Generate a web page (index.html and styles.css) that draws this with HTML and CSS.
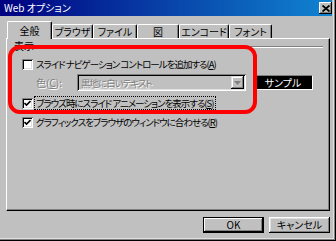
FILE: index.html
```html
<!DOCTYPE html>
<html lang="ja">
<head>
    <meta charset="UTF-8">
    <title>Web オプション</title>
    <link rel="stylesheet" href="styles.css">
</head>
<body>
    <div class="window">
        <div class="titlebar">
            <span class="title">Web オプション</span>
            <span class="close-btn">
                <svg width="8" height="7" viewBox="0 0 8 7">
                    <path d="M0.5 0.5 L7.5 6.5 M7.5 0.5 L0.5 6.5" stroke="#000" stroke-width="1.8" fill="none"/>
                </svg>
            </span>
        </div>

        <div class="dialog">
            <div class="tabs">
                <div class="tab active tab-general">全般</div>
                <div class="tab tab-browser">ブラウザ</div>
                <div class="tab tab-file">ファイル</div>
                <div class="tab tab-picture">図</div>
                <div class="tab tab-encoding">エンコード</div>
                <div class="tab tab-font">フォント</div>
            </div>

            <div class="panel">
                <div class="group-head">
                    <span>表示</span>
                    <span class="rule"></span>
                </div>

                <div class="option">
                    <span class="check"></span>
                    <span class="label">スライド ナビゲーション コントロールを追加する(<u>A</u>)</span>
                </div>

                <div class="color-row">
                    <span class="disabled color-label">色(<u>C</u>):</span>
                    <div class="combo">
                        <span class="disabled label">黒地に白いテキスト</span>
                        <span class="combo-btn">
                            <svg width="7" height="4" viewBox="0 0 7 4">
                                <path d="M0 0 H7 L3.5 4 Z" fill="#808080"/>
                            </svg>
                        </span>
                    </div>
                    <div class="sample">サンプル</div>
                </div>

                <div class="option">
                    <span class="check">
                        <svg width="7" height="7" viewBox="0 0 7 7">
                            <polyline points="0.5,3 2.5,5 6.5,1" stroke="#000" stroke-width="1.6" fill="none"/>
                        </svg>
                    </span>
                    <span class="label focused">ブラウズ時にスライド アニメーションを表示する(<u>S</u>)</span>
                </div>

                <div class="option">
                    <span class="check">
                        <svg width="7" height="7" viewBox="0 0 7 7">
                            <polyline points="0.5,3 2.5,5 6.5,1" stroke="#000" stroke-width="1.6" fill="none"/>
                        </svg>
                    </span>
                    <span class="label">グラフィックスをブラウザのウィンドウに合わせる(<u>R</u>)</span>
                </div>

                <!-- red marker drawn over the first options -->
                <div class="highlight"></div>
            </div>

            <div class="buttons">
                <button class="btn default">OK</button>
                <button class="btn">キャンセル</button>
            </div>
        </div>
    </div>
</body>
</html>
```

FILE: styles.css
```css
* {
    box-sizing: border-box;
}
body {
    margin: 0;
    background: #c0c0c0;
    font-family: "Noto Sans CJK JP", "Noto Sans", sans-serif;
    font-size: 10px;
    line-height: 12px;
    color: #000;
    font-feature-settings: "palt";
}
.window {
    width: 336px;
    height: 241px;
    display: flex;
    flex-direction: column;
    border-right: 1px solid #000;
    border-bottom: 1px solid #000;
    box-shadow: inset -1px -1px #808080, inset -2px -2px #dfdfdf;
    padding: 0 3px 2px 0;
}
.titlebar {
    height: 16px;
    display: flex;
    align-items: center;
    justify-content: space-between;
    padding: 0 0 0 4px;
    background: linear-gradient(90deg, #000080, #1084d0);
    color: #fff;
}
.title {
    font-size: 10px;
}
.close-btn {
    width: 13px;
    height: 12px;
    display: flex;
    align-items: center;
    justify-content: center;
    background: #c0c0c0;
    box-shadow: inset -1px -1px #000, inset 1px 1px #fff, inset -2px -2px #808080;
}
.dialog {
    flex: 1;
    padding: 5px 0 0 6px;
}
.tabs {
    height: 17px;
    display: flex;
    align-items: flex-end;
    padding-left: 3px;
    position: relative;
    z-index: 1;
}
.tab {
    height: 14px;
    display: flex;
    align-items: center;
    justify-content: center;
    border-top: 1px solid #fff;
    border-left: 1px solid #fff;
    border-right: 1px solid #000;
    border-radius: 2px 2px 0 0;
    box-shadow: inset -1px 0 #808080;
    background: #c0c0c0;
}
.tab.active {
    height: 18px;
    margin: 0 0 -1px -2px;
}
.tab-general { width: 45px; }
.tab-browser { width: 41px; }
.tab-file { width: 44px; }
.tab-picture { width: 42px; }
.tab-encoding { width: 50px; }
.tab-font { width: 43px; }
.panel {
    position: relative;
    width: 324px;
    height: 173px;
    border: 1px solid;
    border-color: #fff #000 #000 #fff;
    box-shadow: inset -1px -1px #808080;
    padding: 1px 0 0 7px;
}
.group-head {
    display: flex;
    align-items: center;
    height: 12px;
    margin-right: 6px;
}
.rule {
    flex: 1;
    margin: 2px 0 0 4px;
    border-top: 1px solid #808080;
    border-bottom: 1px solid #fff;
}
.option {
    height: 14px;
    margin-top: 5px;
    padding-left: 8px;
    display: flex;
    align-items: center;
    gap: 3px;
}
.label {
    font-size: 9.5px;
    letter-spacing: -1px;
}
.check {
    width: 11px;
    height: 11px;
    display: flex;
    align-items: center;
    justify-content: center;
    background: #fff;
    box-shadow: inset 1px 1px #808080, inset -1px -1px #fff, inset 2px 2px #000, inset -2px -2px #dfdfdf;
}
.focused {
    outline: 1px dotted #000;
    padding: 0 2px 0 1px;
    margin-left: -1px;
}
.disabled {
    color: #808080;
    text-shadow: 1px 1px 0 #fff;
}
.color-row {
    height: 17px;
    margin-top: 3px;
    padding-left: 22px;
    display: flex;
    align-items: center;
}
.color-label {
    width: 41px;
}
.combo {
    width: 169px;
    height: 17px;
    display: flex;
    align-items: center;
    justify-content: space-between;
    padding: 2px 2px 2px 4px;
    box-shadow: inset 1px 1px #808080, inset -1px -1px #fff, inset 2px 2px #000, inset -2px -2px #dfdfdf;
}
.combo-btn {
    width: 13px;
    height: 13px;
    display: flex;
    align-items: center;
    justify-content: center;
    box-shadow: inset -1px -1px #000, inset 1px 1px #dfdfdf, inset -2px -2px #808080, inset 2px 2px #fff;
}
.sample {
    width: 60px;
    height: 15px;
    margin-left: 7px;
    display: flex;
    align-items: center;
    justify-content: center;
    background: #000;
    color: #fff;
    border: 1px solid;
    border-color: #808080 #fff #fff #808080;
}
.highlight {
    position: absolute;
    left: 1px;
    top: 6px;
    width: 249px;
    height: 69px;
    border: 4px solid #ff0000;
    border-radius: 12px;
}
.buttons {
    display: flex;
    justify-content: flex-end;
    gap: 5px;
    margin: 6px 1px 0 0;
    width: 324px;
}
.btn {
    width: 61px;
    height: 16px;
    padding: 0;
    font: inherit;
    color: #000;
    background: #c0c0c0;
    border: none;
    box-shadow: inset -1px -1px #000, inset 1px 1px #fff, inset -2px -2px #808080, inset 2px 2px #dfdfdf;
}
.btn.default {
    border: 1px solid #000;
    box-shadow: inset -1px -1px #000, inset 1px 1px #fff, inset -2px -2px #808080;
}
```
